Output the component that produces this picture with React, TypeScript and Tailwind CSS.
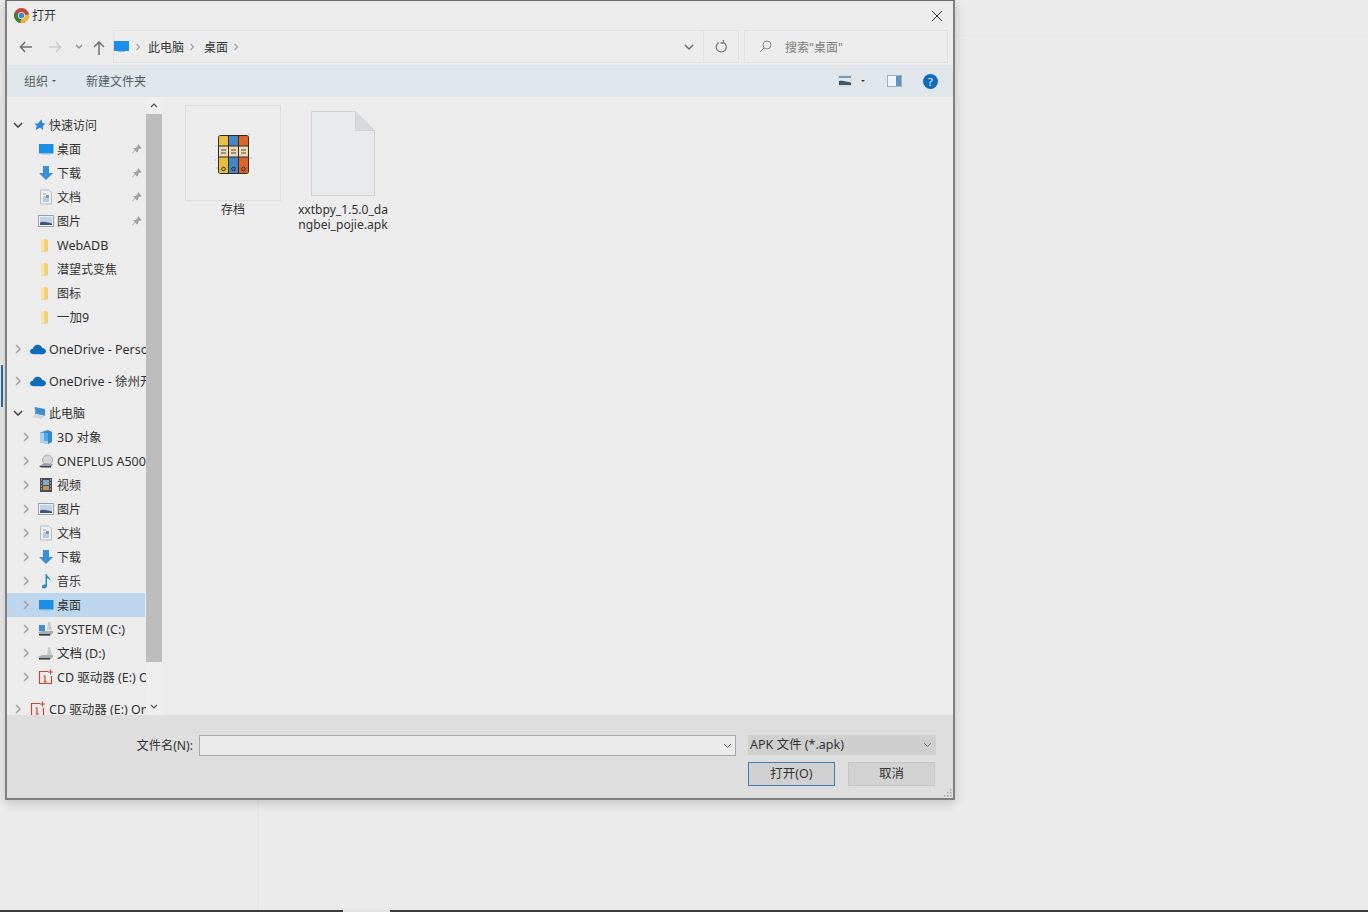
import React from "react";

const Chevron = ({ open, className = "" }: { open?: boolean; className?: string }) => (
  <svg width="10" height="10" viewBox="0 0 10 10" className={className} fill="none" strokeWidth="1.6" stroke={open ? "#4a4a4a" : "#a3a3a3"}>
    {open ? <path d="M1 3l4 4 4-4" /> : <path d="M3 1l4 4-4 4" />}
  </svg>
);

const Desktop = () => (
  <svg width="16" height="14" viewBox="0 0 16 14"><rect x="1" y="2" width="14.500" height="9.500" fill="#1b8fe6" /><rect x="4" y="11.500" width="8" height="1" fill="#8dbbe0" /></svg>
);
const Download = () => (
  <svg width="16" height="16" viewBox="0 0 16 16"><path d="M5 1h6v7h4l-7 7-7-7h4z" fill="#3a90d8" /></svg>
);
const Docs = () => (
  <svg width="16" height="16" viewBox="0 0 16 16"><path d="M2.500 1h8l3 3v11h-11z" fill="#eef0f2" stroke="#b4babf" /><path d="M5 5h3M5 8h6M5 10h6M5 12h6" stroke="#8fa3b5" /><rect x="8" y="6" width="3" height="3" fill="#6b9fc9" /></svg>
);
const Pictures = () => (
  <svg width="16" height="14" viewBox="0 0 16 14"><rect x="0.500" y="1.500" width="15" height="11" fill="#eef2f6" stroke="#9ba1a8" /><rect x="2" y="3" width="12" height="8" fill="#bdd3e6" /><path d="M2 11V8.500c3-1.600 6-.2 12 1V11z" fill="#3f566e" /></svg>
);
const Folder = () => (
  <svg width="16" height="16" viewBox="0 0 16 16"><path d="M3 2l6 0 1 1.500v11L3 15z" fill="#f3cd78" /><path d="M3 2v13l3-1V2z" fill="#f8e2a8" /></svg>
);
const Star = () => (
  <svg width="16" height="16" viewBox="0 0 16 16" className="ml-[3px]"><path d="M10.500 1l1 4.600 4 .9-3.500 2.600.6 5-3.900-2.600L3 14l1.700-5L1.500 6l4.600.1z" fill="#2f8ad6" /></svg>
);
const Cloud = () => (
  <svg width="17" height="11" viewBox="0 0 17 11"><path d="M4 10.500C1.500 10.500 0 9.200 0 7.500 0 5.800 1.200 4.800 3 4.600 3.700 2 5.800.5 8.200.5c2.300 0 4 1.300 4.800 3.300 2.200 0 4 1.400 4 3.400s-1.500 3.300-3.500 3.300z" fill="#0f6cbd" /></svg>
);
const PC = () => (
  <svg width="16" height="16" viewBox="0 0 16 16" className="ml-[2px]"><path d="M3 1l12 2.500v7.500L5 9z" fill="#3f8ecb" /><path d="M3 1l2 8-1.500 1z" fill="#7f95a8" /><path d="M0 12.500l4.500-2.500 10 1.500-4 3z" fill="#cfd3d6" /></svg>
);
const Cube = () => (
  <svg width="16" height="16" viewBox="0 0 16 16"><path d="M2 3.500L10 1l4 2v10l-4 2-8-1.500z" fill="#2f8ad6" /><path d="M2 3.500l8 1V15l-8-1.500z" fill="#a6d5f4" /><path d="M6 4h4v8H6z" fill="#56a8e6" /></svg>
);
const Phone = () => (
  <svg width="16" height="16" viewBox="0 0 16 16"><circle cx="9.500" cy="7" r="5" fill="#d3d6d8" stroke="#aab0b4" /><path d="M1 13l6-3 8 1-2 3H4z" fill="#9b9fa3" /><path d="M1 13h12v1.500H3z" fill="#3c3f44" /></svg>
);
const Video = () => (
  <svg width="16" height="16" viewBox="0 0 16 16"><rect x="2" y="1" width="12" height="14" fill="#4a4f57" /><rect x="5" y="3" width="6" height="5" fill="#86a9c9" /><rect x="5" y="9" width="6" height="4" fill="#c2964f" /><path d="M3 3h1M3 6h1M3 9h1M3 12h1M12 3h1M12 6h1M12 9h1M12 12h1" stroke="#d7dade" /></svg>
);
const Music = () => (
  <svg width="16" height="16" viewBox="0 0 16 16"><path d="M7.500 1h1.300c.3 3 4 3.500 3.500 7-.6-1.800-2-2.500-3.300-2.800V13c0 1.500-1.500 2.500-3 2.500S4 14.600 4 13.500c0-1.400 1.500-2.300 3.500-2z" fill="#2f8ad6" /></svg>
);
const DriveC = () => (
  <svg width="16" height="16" viewBox="0 0 16 16"><rect x="1" y="4" width="6" height="6" fill="#3a90d8" /><path d="M10 1h2l2 8h-5z" fill="#c8ccd0" /><path d="M0 11l4-1 11 0 0 2-3 3H2z" fill="#a9adb2" /><path d="M1 13h11v1.500H1z" fill="#3c3f44" /></svg>
);
const DriveD = () => (
  <svg width="16" height="16" viewBox="0 0 16 16"><path d="M10 2h2l2 8h-5z" fill="#c8ccd0" /><path d="M0 12l4-2 11 0 0 2-3 2.500H2z" fill="#a9adb2" /><path d="M1 13h11v1.500H1z" fill="#3c3f44" /></svg>
);
const OnePlus = () => (
  <svg width="16" height="16" viewBox="0 0 16 16" fill="none" stroke="#c8492f" strokeWidth="1.200">
    <path d="M10 2.500H1.500v12h12V7" />
    <path d="M5.500 7h1.500v6M5.500 13h3.500M12.500 0.500v5M10 3h5" />
  </svg>
);
const Pin = () => (
  <svg width="10" height="10" viewBox="0 0 10 10"><path d="M6 0l4 4-1 .5-1.300 0L6 6.500 6 8 5 8.500 3.300 6.700.5 9.500 0 9l3-2.900L1.500 5 2 4l1.500 0 2-1.800V1z" fill="#a3a3a3" /></svg>
);

type Item = { label: string; icon: React.ReactNode; level?: number; chev?: "open" | "closed"; pin?: boolean; sel?: boolean; mt?: boolean };

const items: Item[] = [
  { label: "快速访问", icon: <Star />, chev: "open" },
  { label: "桌面", icon: <Desktop />, level: 1, pin: true },
  { label: "下载", icon: <Download />, level: 1, pin: true },
  { label: "文档", icon: <Docs />, level: 1, pin: true },
  { label: "图片", icon: <Pictures />, level: 1, pin: true },
  { label: "WebADB", icon: <Folder />, level: 1 },
  { label: "潜望式变焦", icon: <Folder />, level: 1 },
  { label: "图标", icon: <Folder />, level: 1 },
  { label: "一加9", icon: <Folder />, level: 1 },
  { label: "OneDrive - Personal", icon: <Cloud />, chev: "closed", mt: true },
  { label: "OneDrive - 徐州开放大学", icon: <Cloud />, chev: "closed", mt: true },
  { label: "此电脑", icon: <PC />, chev: "open", mt: true },
  { label: "3D 对象", icon: <Cube />, level: 1, chev: "closed" },
  { label: "ONEPLUS A5000", icon: <Phone />, level: 1, chev: "closed" },
  { label: "视频", icon: <Video />, level: 1, chev: "closed" },
  { label: "图片", icon: <Pictures />, level: 1, chev: "closed" },
  { label: "文档", icon: <Docs />, level: 1, chev: "closed" },
  { label: "下载", icon: <Download />, level: 1, chev: "closed" },
  { label: "音乐", icon: <Music />, level: 1, chev: "closed" },
  { label: "桌面", icon: <Desktop />, level: 1, chev: "closed", sel: true },
  { label: "SYSTEM (C:)", icon: <DriveC />, level: 1, chev: "closed" },
  { label: "文档 (D:)", icon: <DriveD />, level: 1, chev: "closed" },
  { label: "CD 驱动器 (E:) OnePlus Drivers", icon: <OnePlus />, level: 1, chev: "closed" },
  { label: "CD 驱动器 (E:) OnePlus Drivers", icon: <OnePlus />, chev: "closed", mt: true },
];

const isCjk = (s: string) => /^[\u4e00-\u9fff]+$/.test(s);

const Row = ({ it }: { it: Item }) => (
  <div className={`relative flex h-6 shrink-0 items-center whitespace-nowrap ${it.mt ? "mt-2" : ""} ${it.sel ? "mr-[1px] bg-[#bdd6ee]" : ""} ${it.level ? "pl-[14px]" : "pl-[6px]"}`}>
    <span className="flex w-[10px] shrink-0 justify-center">
      {it.chev && <Chevron open={it.chev === "open"} />}
    </span>
    <span className="ml-[7px] flex w-4 shrink-0 items-center justify-center">{it.icon}</span>
    <span className={`ml-[3px] mt-[2px] text-[#333] ${isCjk(it.label) ? "text-[12px]" : "text-[12.5px]"}`}>{it.label}</span>
    {it.pin && <span className="absolute left-[125px] top-[7px]"><Pin /></span>}
  </div>
);

const Binder = () => (
  <svg width="38" height="46" viewBox="0 0 38 46" className="mt-[4px]">
    <g fill="#a9a39a"><circle cx="1" cy="28" r=".7" /><circle cx="3" cy="36" r=".7" /><circle cx="37" cy="26" r=".7" /><circle cx="35" cy="2" r=".7" /><circle cx="2" cy="14" r=".7" /></g>
    <rect x="4" y="3" width="31" height="39" rx="3" fill="#33291f" />
    <rect x="5" y="4" width="9" height="37" rx="1" fill="#e9bd3d" />
    <rect x="15" y="4" width="9" height="37" fill="#3f87c8" />
    <rect x="25" y="4" width="9" height="37" rx="1" fill="#dc642b" />
    <rect x="5" y="14" width="29" height="11" fill="#ecd9b8" />
    <path d="M4 14h31M4 25h31" stroke="#33291f" strokeWidth="1" />
    <path d="M7 18h5M7 21h5M17 18h5M17 21h5M27 18h5M27 21h5" stroke="#5a4a3a" strokeWidth="1.200" />
    <path d="M14.500 3v39M24.500 3v39" stroke="#33291f" strokeWidth="1" />
    <circle cx="9.500" cy="37" r="1.800" fill="none" stroke="#33291f" />
    <circle cx="19.500" cy="37" r="1.800" fill="none" stroke="#33291f" />
    <circle cx="29.500" cy="37" r="1.800" fill="none" stroke="#33291f" />
  </svg>
);

const FileIcon = () => (
  <svg width="64" height="85" viewBox="0 0 64 85">
    <path d="M.5.500h44l19 19v65H.500z" fill="#e8eaeb" stroke="#cfd1d2" />
    <path d="M44.500.500v19h19z" fill="#d8d9da" stroke="#cfd1d2" />
  </svg>
);

export default function App() {
  return (
    <div
      className="relative h-[912px] w-[1368px] overflow-hidden bg-[#ebebeb]"
      style={{ fontFamily: '"Noto Sans", "Noto Sans CJK SC", sans-serif' }}
    >
      {/* background app behind the dialog */}
      <div className="absolute left-[1px] top-[365px] h-[42px] w-[2px] bg-[#2f6ea5]" />
      <div className="absolute bottom-0 left-[258px] h-[112px] w-[1px] bg-[#e3e3e3]" />
      <div className="absolute left-[955px] top-[35px] h-[1px] w-[413px] bg-[#e7e7e7]" />
      <div className="absolute inset-x-0 bottom-0 h-[2px] bg-[#3c3c3c]" />
      <div className="absolute bottom-0 left-[343px] h-[2px] w-[47px] bg-[#e4e4e4]" />

      {/* dialog window */}
      <div className="absolute left-[5px] top-0 flex h-[800px] w-[950px] flex-col border-x-2 border-b-2 border-t border-x-[#7f7f7f] border-b-[#7f7f7f] border-t-[#6d6d6d] bg-[#ececec] shadow-[0_3px_10px_rgba(0,0,0,0.18)]">
        {/* title */}
        <div className="flex h-[29px] shrink-0 items-center pl-[7px] pr-[10px]">
          <svg width="15" height="15" viewBox="0 0 16 16">
            <circle cx="8" cy="8" r="8" fill="#c9453a" />
            <path d="M8 8L1 4.500A8 8 0 0 0 7 16z" fill="#3c7d3f" />
            <path d="M8 8l-1 8a8 8 0 0 0 9-9z" fill="#e8b830" />
            <circle cx="8" cy="8" r="3.800" fill="#e9e9e9" />
            <circle cx="8" cy="8" r="2.900" fill="#3f86d6" />
          </svg>
          <span className="ml-[3px] text-[12px] text-[#333]">打开</span>
          <svg className="ml-auto" width="12" height="12" viewBox="0 0 12 12" fill="none" stroke="#333" strokeWidth="1">
            <path d="M1 1l10 10M11 1L1 11" />
          </svg>
        </div>

        {/* nav */}
        <div className="flex h-[35px] shrink-0 items-start">
          <div className="flex h-[33px] w-[106px] shrink-0 items-center">
            <svg className="ml-[12px]" width="14" height="12" viewBox="0 0 14 12" fill="none" stroke="#6f6f6f" strokeWidth="1.500"><path d="M6 1L1.500 6 6 11M2 6h11" /></svg>
            <svg className="ml-[15px]" width="14" height="12" viewBox="0 0 14 12" fill="none" stroke="#c9c9c9" strokeWidth="1.500"><path d="M8 1l4.500 5L8 11M12 6H1" /></svg>
            <svg className="ml-[13px]" width="8" height="6" viewBox="0 0 8 6" fill="none" stroke="#8f8f8f" strokeWidth="1.300"><path d="M1 1l3 3 3-3" /></svg>
            <svg className="ml-[10px] mt-[2px]" width="12" height="14" viewBox="0 0 12 14" fill="none" stroke="#727272" strokeWidth="1.500"><path d="M1 6l5-5 5 5M6 1.500V14" /></svg>
          </div>
          <div className="flex h-[33px] w-[591px] shrink-0 items-center border border-[#e0e0e0]">
            <svg width="15" height="12" viewBox="0 0 15 12"><rect width="15" height="10" fill="#1b8fe6" /><rect x="4" y="10" width="7" height="1" fill="#8dbbe0" /></svg>
            <Chevron className="ml-[4px] scale-75" />
            <span className="ml-[5px] mt-[2px] text-[12px] text-[#333]">此电脑</span>
            <Chevron className="ml-[3px] scale-75" />
            <span className="ml-[7px] mt-[2px] text-[12px] text-[#333]">桌面</span>
            <Chevron className="ml-[3px] scale-75" />
            <svg className="ml-auto mr-[9px] mt-[2px]" width="10" height="7" viewBox="0 0 10 7" fill="none" stroke="#6a6a6a" strokeWidth="1.500"><path d="M1 1l4 4 4-4" /></svg>
          </div>
          <div className="flex h-[33px] w-[35px] shrink-0 items-center justify-center border border-l-0 border-[#e0e0e0]">
            <svg width="12" height="13" viewBox="0 0 12 13" fill="none" stroke="#7a7a7a" strokeWidth="1.300"><path d="M4 2.500a5 5 0 1 0 4.500 0M8.500 0v3H5.500" /></svg>
          </div>
          <div className="ml-[5px] flex h-[33px] w-[204px] shrink-0 items-center border border-[#e0e0e0]">
            <svg className="ml-[14px]" width="13" height="13" viewBox="0 0 13 13" fill="none" stroke="#8c8c8c"><circle cx="8" cy="5" r="4" /><path d="M5 8l-4 4" /></svg>
            <span className="ml-[13px] mt-[2px] text-[12px] text-[#808080]">搜索"桌面"</span>
          </div>
        </div>

        {/* toolbar */}
        <div className="flex h-[32px] shrink-0 items-center bg-[#e1e6ea] pl-[17px] pr-[15px]">
          <span className="mt-[2px] text-[12px] text-[#4f5a63]">组织</span>
          <span className="ml-[4px] h-0 w-0 border-x-[2px] border-t-[2px] border-x-transparent border-t-[#4f5a63]" />
          <span className="ml-[30px] mt-[2px] text-[12px] text-[#4f5a63]">新建文件夹</span>
          <svg className="ml-auto" width="14" height="12" viewBox="0 0 14 12">
            <rect width="14" height="11" fill="#dfe6ec" stroke="#b7c2cc" strokeWidth=".5" />
            <rect x="1" y="1" width="12" height="2" fill="#7f9ab3" />
            <path d="M1 10V6c4-1 8 1 12 1.500V10z" fill="#3d5568" />
          </svg>
          <span className="ml-[9px] h-0 w-0 border-x-[2px] border-t-[2px] border-x-transparent border-t-[#333]" />
          <svg className="ml-[22px]" width="15" height="12" viewBox="0 0 15 12">
            <rect x=".5" y=".5" width="14" height="11" fill="#f2f5f7" stroke="#9fb0bf" />
            <rect x="9" y="1" width="5" height="10" fill="#5f95c4" />
          </svg>
          <span className="ml-[21px] flex h-[15px] w-[15px] items-center justify-center rounded-full bg-[#0f6cbd] text-[11px] leading-none text-white">?</span>
        </div>

        {/* body */}
        <div className="flex min-h-0 flex-1 overflow-hidden">
          <div className="flex w-[139px] shrink-0 flex-col overflow-hidden pt-[16px]">
            {items.map((it, i) => (
              <Row key={i} it={it} />
            ))}
          </div>
          <div className="flex w-[16px] shrink-0 flex-col items-center bg-[#efefef]">
            <div className="flex h-[17px] shrink-0 items-center justify-center">
              <svg width="8" height="5" viewBox="0 0 8 5" fill="none" stroke="#555" strokeWidth="1.200"><path d="M1 4l3-3 3 3" /></svg>
            </div>
            <div className="h-[548px] w-full shrink-0 bg-[#bdbdbd]" />
            <div className="mt-auto flex h-[17px] items-center justify-center pb-[1px]">
              <svg width="8" height="5" viewBox="0 0 8 5" fill="none" stroke="#555" strokeWidth="1.200"><path d="M1 1l3 3 3-3" /></svg>
            </div>
          </div>
          <div className="flex flex-1 items-start gap-[14px] pl-[23px] pt-[8px]">
            <div className="flex w-[96px] flex-col items-center">
              <div className="flex h-[96px] w-[96px] items-center justify-center border border-[#dcdcdc]">
                <Binder />
              </div>
              <div className="mt-[1px] text-center text-[12px] leading-[15px] text-[#333]">存档</div>
            </div>
            <div className="flex w-[96px] flex-col items-center pt-[6px]">
              <div className="h-[90px]"><FileIcon /></div>
              <div className="mt-[1px] w-[96px] text-center text-[12.1px] leading-[15px] text-[#333] [overflow-wrap:anywhere]">
                xxtbpy_1.5.0_da<br />ngbei_pojie.apk
              </div>
            </div>
          </div>
        </div>

        {/* footer */}
        <div className="relative flex h-[83px] shrink-0 flex-col bg-[#dedede] pr-[17px] pt-[20px]">
          <div className="flex items-start justify-end">
            <span className="mr-[6px] text-[12.2px] leading-[21px] text-[#333]">文件名(N):</span>
            <div className="flex h-[21px] w-[537px] items-center justify-end border border-[#a9a9a9] bg-[#ebebeb] pr-[3px]">
              <svg width="9" height="6" viewBox="0 0 9 6" fill="none" stroke="#777"><path d="M1 1l3.500 3.500L8 1" /></svg>
            </div>
            <div className="ml-[12px] flex h-[20px] w-[188px] items-center justify-between bg-[#cfcfcf] pl-[2px] pr-[4px]">
              <span className="text-[12.5px] text-[#333]">APK 文件 (*.apk)</span>
              <svg width="9" height="6" viewBox="0 0 9 6" fill="none" stroke="#777"><path d="M1 1l3.500 3.500L8 1" /></svg>
            </div>
          </div>
          <div className="mt-[6px] flex justify-end gap-[13px] pr-[1px]">
            <div className="flex h-[24px] w-[87px] items-center justify-center border border-[#3f7fb5] bg-[#d0d0d0] text-[12.5px] text-[#333]">打开(O)</div>
            <div className="flex h-[24px] w-[87px] items-center justify-center border border-[#c6c6c6] bg-[#d2d2d2] text-[12.5px] text-[#333]">取消</div>
          </div>
          <svg className="absolute bottom-[1px] right-[1px]" width="8" height="8" viewBox="0 0 8 8" fill="#a8a8a8">
            <rect x="6" y="0" width="1.500" height="1.500" /><rect x="3" y="3" width="1.500" height="1.500" /><rect x="6" y="3" width="1.500" height="1.500" /><rect x="0" y="6" width="1.500" height="1.500" /><rect x="3" y="6" width="1.500" height="1.500" /><rect x="6" y="6" width="1.500" height="1.500" />
          </svg>
        </div>
      </div>
    </div>
  );
}
